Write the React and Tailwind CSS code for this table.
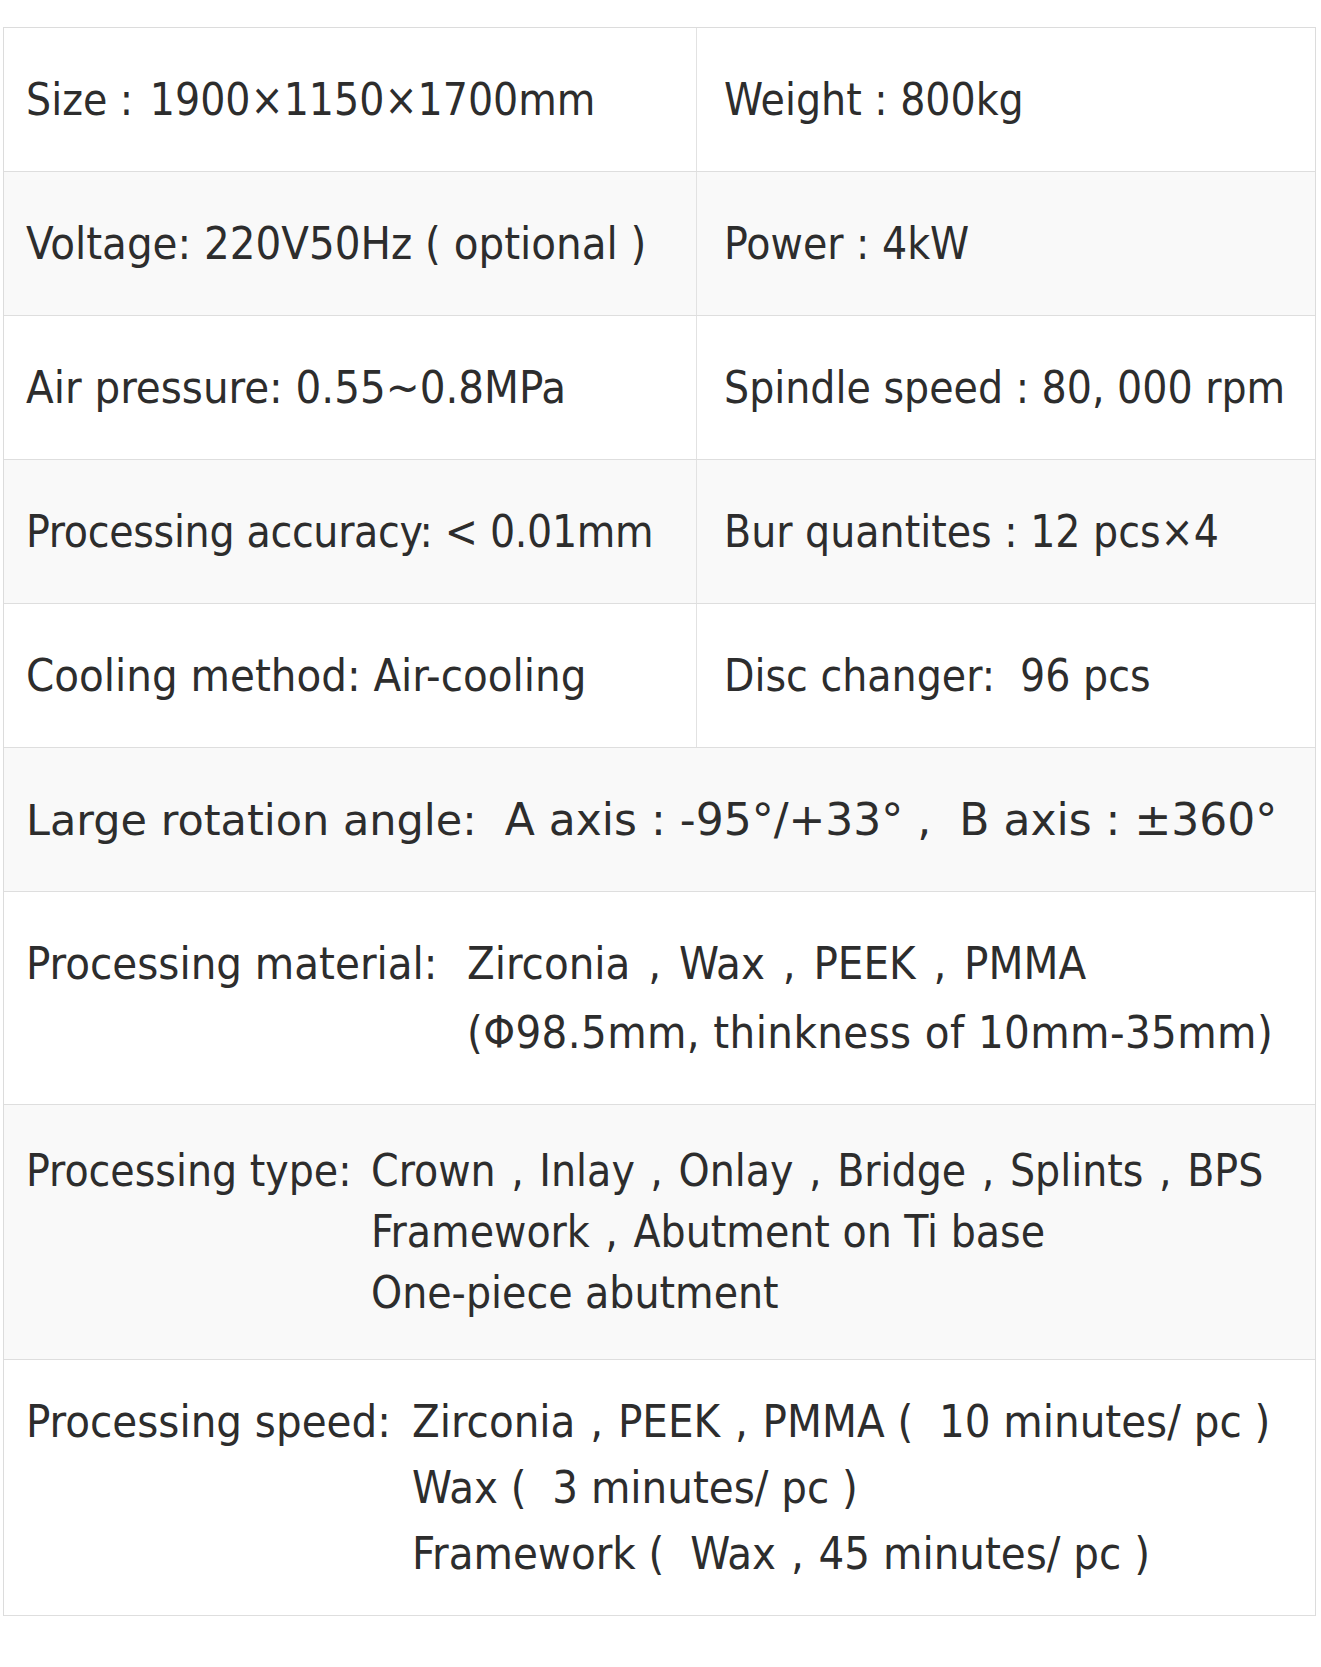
import React from "react";

const cond = { fontFamily: '"DejaVu Sans Condensed", "DejaVu Sans", sans-serif' };
const wide = { fontFamily: '"DejaVu Sans", sans-serif' };

function withCommas(text, gap) {
  const parts = text.split(" , ");
  const out = [];
  parts.forEach((p, i) => {
    if (i > 0) out.push(<span key={"c" + i} className={gap}> , </span>);
    out.push(<span key={"p" + i}>{p}</span>);
  });
  return out;
}

function TwoCol({ left, right, bg, leftSize = "text-[44px]" }) {
  return (
    <div className={"grid grid-cols-[693px_1fr] h-[144px] border-b border-[#dedede] " + bg}>
      <div className={"flex items-center whitespace-pre text-[#2d2d2d] pl-[22px] border-r border-[#e2e2e2] " + leftSize} style={cond}>
        {left}
      </div>
      <div className="flex items-center whitespace-pre text-[#2d2d2d] pl-[27px] text-[44px]" style={cond}>
        {right}
      </div>
    </div>
  );
}

function Multi({ label, lines, bg, h, lh, labelW, size, gap, lastTrack = "" }) {
  return (
    <div className={"flex items-center border-b border-[#dedede] pl-[22px] " + bg + " " + h}>
      <div className={"flex flex-col text-[#2d2d2d] whitespace-pre " + size} style={cond}>
        {lines.map((l, i) => (
          <div key={i} className={"flex items-center " + lh}>
            <span className={"shrink-0 " + labelW}>{i === 0 ? label : ""}</span>
            <span className={i > 0 ? lastTrack : ""}>{withCommas(l, gap)}</span>
          </div>
        ))}
      </div>
    </div>
  );
}

export default function App() {
  return (
    <div className="bg-white w-[1321px] h-[1667px] pt-[27px] pl-[3px]">
      <div className="w-[1313px] border border-[#dcdcdc] border-b-0">
        <TwoCol
          bg="bg-white"
          left={
            <>
              <span>Size : </span>
              <span className="pl-[4px]">1900×1150×1700mm</span>
            </>
          }
          right="Weight : 800kg"
        />
        <TwoCol bg="bg-[#f9f9f9]" leftSize="text-[45px]" left="Voltage: 220V50Hz ( optional )" right="Power : 4kW" />
        <TwoCol bg="bg-white" leftSize="text-[45px]" left="Air pressure: 0.55~0.8MPa" right="Spindle speed : 80, 000 rpm" />
        <TwoCol bg="bg-[#f9f9f9]" leftSize="text-[44px] tracking-[-0.3px]" left="Processing accuracy: < 0.01mm" right="Bur quantites : 12 pcs×4" />
        <TwoCol bg="bg-white" leftSize="text-[45px]" left="Cooling method: Air-cooling" right="Disc changer:  96 pcs" />
        <div className="flex items-center h-[144px] border-b border-[#dedede] bg-[#f9f9f9] pl-[22px]">
          <span className="whitespace-pre text-[#2d2d2d] text-[43px]" style={wide}>
            Large rotation angle:
            <span className="ml-[28px] text-[44px]">A axis : -95°/+33° ,  B axis : ±360°</span>
          </span>
        </div>
        <Multi
          bg="bg-white"
          h="h-[213px]"
          lh="h-[69px]"
          labelW="w-[441px]"
          size="text-[45px]"
          gap="px-[5px]"
          lastTrack="tracking-[0.4px]"
          label="Processing material:"
          lines={["Zirconia , Wax , PEEK , PMMA", "(Φ98.5mm, thinkness of 10mm-35mm)"]}
        />
        <Multi
          bg="bg-[#f9f9f9]"
          h="h-[255px]"
          lh="h-[61px]"
          labelW="w-[345px]"
          size="text-[44px]"
          gap="px-[3px]"
          label="Processing type:"
          lines={["Crown , Inlay , Onlay , Bridge , Splints , BPS", "Framework , Abutment on Ti base", "One-piece abutment"]}
        />
        <Multi
          bg="bg-white"
          h="h-[256px]"
          lh="h-[66px]"
          labelW="w-[386px]"
          size="text-[45px]"
          gap="px-[2px]"
          label="Processing speed:"
          lines={["Zirconia , PEEK , PMMA (  10 minutes/ pc )", "Wax (  3 minutes/ pc )", "Framework (  Wax , 45 minutes/ pc )"]}
        />
      </div>
    </div>
  );
}
